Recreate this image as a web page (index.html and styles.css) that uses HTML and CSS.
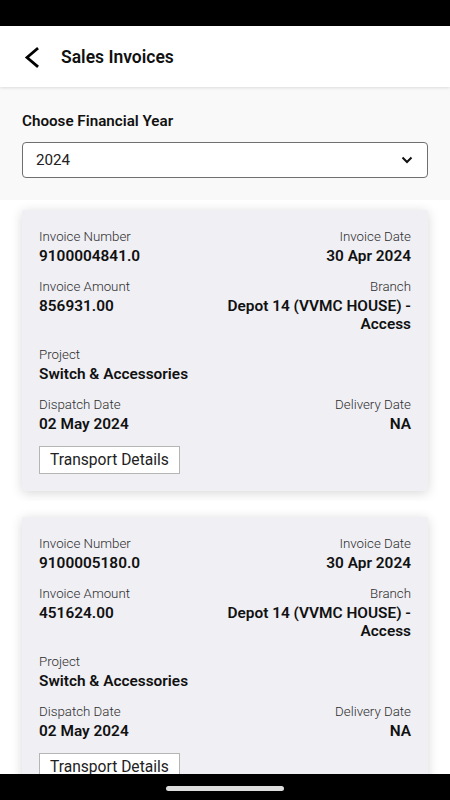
FILE: index.html
```html
<!DOCTYPE html>
<html>
<head>
<meta charset="utf-8">
<link rel="stylesheet" href="styles.css">
</head>
<body>
<div class="screen">
  <div class="status-bar"></div>
  <header class="app-header">
    <svg class="back-icon" width="20" height="24" viewBox="0 0 20 24"><path d="M13 4 L3 12.5 L13 21" fill="none" stroke="#000" stroke-width="2.8" stroke-linecap="square"/></svg>
    <h1 class="title">Sales Invoices</h1>
  </header>
  <main class="content">
    <section class="filter">
      <div class="filter-label">Choose Financial Year</div>
      <div class="select">
        <span class="select-value">2024</span>
        <svg class="select-chevron" width="12" height="8" viewBox="0 0 12 8"><path d="M1.5 1.5 L6 6 L10.5 1.5" fill="none" stroke="#111" stroke-width="2"/></svg>
      </div>
    </section>
    <section class="list">
      <div class="item">
        <div class="card">
          <div class="row">
            <div class="field"><div class="label">Invoice Number</div><div class="value">9100004841.0</div></div>
            <div class="field right"><div class="label">Invoice Date</div><div class="value">30 Apr 2024</div></div>
          </div>
          <div class="row">
            <div class="field"><div class="label">Invoice Amount</div><div class="value">856931.00</div></div>
            <div class="field right"><div class="label">Branch</div><div class="value">Depot 14 (VVMC HOUSE) -<br>Access</div></div>
          </div>
          <div class="row">
            <div class="field"><div class="label">Project</div><div class="value">Switch &amp; Accessories</div></div>
          </div>
          <div class="row">
            <div class="field"><div class="label">Dispatch Date</div><div class="value">02 May 2024</div></div>
            <div class="field right"><div class="label">Delivery Date</div><div class="value">NA</div></div>
          </div>
          <div class="btn">Transport Details</div>
        </div>
      </div>
      <div class="item">
        <div class="card">
          <div class="row">
            <div class="field"><div class="label">Invoice Number</div><div class="value">9100005180.0</div></div>
            <div class="field right"><div class="label">Invoice Date</div><div class="value">30 Apr 2024</div></div>
          </div>
          <div class="row">
            <div class="field"><div class="label">Invoice Amount</div><div class="value">451624.00</div></div>
            <div class="field right"><div class="label">Branch</div><div class="value">Depot 14 (VVMC HOUSE) -<br>Access</div></div>
          </div>
          <div class="row">
            <div class="field"><div class="label">Project</div><div class="value">Switch &amp; Accessories</div></div>
          </div>
          <div class="row">
            <div class="field"><div class="label">Dispatch Date</div><div class="value">02 May 2024</div></div>
            <div class="field right"><div class="label">Delivery Date</div><div class="value">NA</div></div>
          </div>
          <div class="btn">Transport Details</div>
        </div>
      </div>
    </section>
  </main>
  <div class="nav-bar"><div class="nav-pill"></div></div>
</div>
</body>
</html>
```
FILE: styles.css
```css
* { box-sizing: border-box; }
html, body { margin: 0; padding: 0; }
body {
  font-family: Roboto, "Liberation Sans", sans-serif;
  color: #111;
  background: #fff;
}
.screen {
  width: 450px;
  height: 800px;
  display: flex;
  flex-direction: column;
  overflow: hidden;
}
.status-bar { height: 26px; background: #000; flex: none; }
.app-header {
  height: 61px;
  flex: none;
  background: #fff;
  display: flex;
  align-items: center;
  padding-left: 24px;
  box-shadow: 0 1px 3px rgba(0,0,0,0.12);
  position: relative;
  z-index: 2;
}
.back-icon { display: block; margin-top: 1px; }
.title {
  margin: 0 0 0 17px;
  font-size: 17.5px;
  font-weight: 600;
  color: #111;
}
.content {
  flex: 1;
  overflow: hidden;
  background: #fff;
}
.filter {
  background: #f9f9f9;
  padding: 25px 22px 22px;
}
.filter-label {
  font-size: 15.2px;
  line-height: 18px;
  font-weight: 600;
  color: #111;
  margin-bottom: 12px;
}
.select {
  height: 36px;
  border: 1px solid #6f6f6f;
  border-radius: 4px;
  background: #fff;
  display: flex;
  align-items: center;
  justify-content: space-between;
  padding: 0 14px 0 13px;
}
.select-value { font-size: 15.2px; color: #222; }
.select-chevron { display: block; }
.list {
  display: flex;
  flex-direction: column;
  gap: 6px;
}
.item {
  padding: 10px 22px;
  overflow: hidden;
  background: #fff;
}
.card {
  background: #efeff4;
  border-radius: 2px;
  box-shadow: 0 2px 12px rgba(0,0,0,0.16);
  padding: 18px 17px 17px;
}
.row {
  display: flex;
  justify-content: space-between;
  margin-bottom: 13px;
}
.field.right { text-align: right; }
.label {
  font-size: 13.3px;
  line-height: 17px;
  font-weight: 300;
  color: #2e2e2e;
}
.value {
  font-size: 15.4px;
  line-height: 18px;
  font-weight: 600;
  color: #111;
  margin-top: 2px;
}
.btn {
  display: inline-block;
  height: 28px;
  line-height: 26px;
  border: 1px solid #b5b5b5;
  background: #fff;
  padding: 0 10px;
  font-size: 15.6px;
  color: #222;
}
.nav-bar {
  height: 26px;
  flex: none;
  background: #000;
  display: flex;
  justify-content: center;
  align-items: center;
}
.nav-pill {
  width: 118px;
  height: 5px;
  border-radius: 3px;
  background: #ddd;
  margin-top: 3px;
}
```
